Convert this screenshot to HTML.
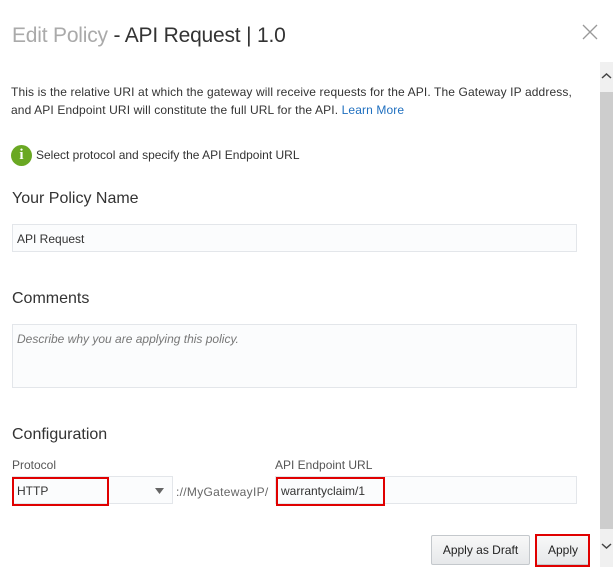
<!DOCTYPE html>
<html><head><meta charset="utf-8"><style>
*{box-sizing:border-box;margin:0;padding:0}
body{width:613px;height:567px;background:#fff;font-family:"Liberation Sans",sans-serif;color:#333;position:relative;overflow:hidden}
.a{position:absolute;white-space:nowrap}
.inp{position:absolute;background:#fbfcfd;border:1px solid #e3e6ea}
.red{position:absolute;border:2px solid #e00000}
.btn{position:absolute;background:linear-gradient(#f8f8f8,#e6e8ea);border:1px solid #c4c8cc;border-radius:2px;font-size:12px;text-align:center;line-height:28px;color:#222}
</style></head><body>
<div class="a" style="left:12px;top:24px;font-size:21px;letter-spacing:-0.2px;color:#aaa">Edit Policy<span style="color:#333"> - API Request | 1.0</span></div>
<svg class="a" style="left:582px;top:24px" width="16" height="16"><path d="M1 1L15 15M15 1L1 15" stroke="#999" stroke-width="1.3"/></svg>
<div class="a" style="left:600px;top:62px;width:13px;height:505px;background:#f0f0f0"></div>
<div class="a" style="left:600px;top:92px;width:13px;height:437px;background:#cdcdcd"></div>
<svg class="a" style="left:601px;top:72px" width="11" height="8"><path d="M1 6L5.5 2L10 6" stroke="#444" stroke-width="1.5" fill="none"/></svg>
<svg class="a" style="left:601px;top:542px" width="11" height="8"><path d="M1 2L5.5 6L10 2" stroke="#444" stroke-width="1.5" fill="none"/></svg>
<div class="a" style="left:11px;top:83px;font-size:12px;line-height:18px;letter-spacing:0.12px;color:#333">This is the relative URI at which the gateway will receive requests for the API. The Gateway IP address,<br>and API Endpoint URI will constitute the full URL for the API. <span style="color:#1f6fbf">Learn More</span></div>
<div class="a" style="left:11px;top:145px;width:21px;height:21px;border-radius:50%;background:#6aa823;color:#fff;font:bold 15px/21px 'Liberation Serif',serif;text-align:center">i</div>
<div class="a" style="left:36px;top:148px;font-size:12px">Select protocol and specify the API Endpoint URL</div>
<div class="a" style="left:12px;top:190px;font-size:16px">Your Policy Name</div>
<div class="inp" style="left:12px;top:224px;width:565px;height:28px"></div>
<div class="a" style="left:17px;top:232px;font-size:12px">API Request</div>
<div class="a" style="left:12px;top:290px;font-size:16px">Comments</div>
<div class="inp" style="left:12px;top:324px;width:565px;height:64px"></div>
<div class="a" style="left:17px;top:332px;font-size:12px;font-style:italic;color:#777">Describe why you are applying this policy.</div>
<div class="a" style="left:12px;top:426px;font-size:16px">Configuration</div>
<div class="a" style="left:12px;top:458px;font-size:12px;color:#555">Protocol</div>
<div class="inp" style="left:12px;top:476px;width:161px;height:28px"></div>
<div class="red" style="left:12px;top:477px;width:97px;height:29px"></div>
<div class="a" style="left:17px;top:484px;font-size:12px">HTTP</div>
<svg class="a" style="left:155px;top:488px" width="9" height="6"><path d="M0 0H9L4.5 6Z" fill="#666"/></svg>
<div class="a" style="left:176px;top:485px;font-size:12px;letter-spacing:0.3px;color:#666">://MyGatewayIP/</div>
<div class="a" style="left:275px;top:458px;font-size:12px;color:#555">API Endpoint URL</div>
<div class="inp" style="left:275px;top:476px;width:302px;height:28px"></div>
<div class="red" style="left:276px;top:477px;width:109px;height:29px"></div>
<div class="a" style="left:281px;top:484px;font-size:12px">warrantyclaim/1</div>
<div class="btn" style="left:431px;top:535px;width:99px;height:30px">Apply as Draft</div>
<div class="btn" style="left:536px;top:535px;width:54px;height:30px">Apply</div>
<div class="red" style="left:535px;top:534px;width:55px;height:33px"></div>
</body></html>
